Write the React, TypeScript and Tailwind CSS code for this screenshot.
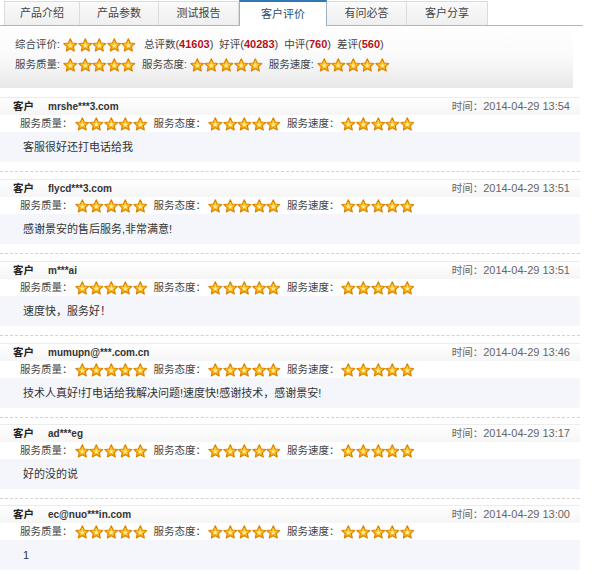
import React from 'react';

const tabs = [
  { label: '产品介绍', w: 'w-[76px]' },
  { label: '产品参数', w: 'w-[79px]' },
  { label: '测试报告', w: 'w-[80px]' },
  { label: '客户评价', w: 'w-[88px]', active: true },
  { label: '有问必答', w: 'w-[80px]' },
  { label: '客户分享', w: 'w-[81px]' },
];

const reviews = [
  { user: 'mrshe***3.com', time: '2014-04-29 13:54', text: '客服很好还打电话给我' },
  { user: 'flycd***3.com', time: '2014-04-29 13:51', text: '感谢景安的售后服务,非常满意!' },
  { user: 'm***ai', time: '2014-04-29 13:51', text: '速度快，服务好！' },
  { user: 'mumupn@***.com.cn', time: '2014-04-29 13:46', text: '技术人真好!打电话给我解决问题!速度快!感谢技术，感谢景安!' },
  { user: 'ad***eg', time: '2014-04-29 13:17', text: '好的没的说' },
  { user: 'ec@nuo***in.com', time: '2014-04-29 13:00', text: '1' },
];

const Star = () => (
  <svg width="14.6" height="14" viewBox="0 0 24 23" className="block">
    <defs>
      <linearGradient id="starFill" x1="0" y1="0" x2="0" y2="1">
        <stop offset="0" stopColor="#ffdc40" />
        <stop offset="1" stopColor="#f4a200" />
      </linearGradient>
    </defs>
    <path
      d="M12 1.2l3.2 6.9 7.4.9-5.5 5.1 1.5 7.4L12 17.8l-6.6 3.7 1.5-7.4L1.4 9l7.4-.9z"
      fill="url(#starFill)"
      stroke="#dc8000"
      strokeWidth="1.8"
      strokeLinejoin="round"
    />
    <path d="M12 8.5l1.2 2.6 2.8.3-2.1 1.9.6 2.8L12 14.7l-2.5 1.4.6-2.8-2.1-1.9 2.8-.3z" fill="#fff3b0" opacity="0.85" />
  </svg>
);

const Stars = ({ className = '' }: { className?: string }) => (
  <span className={`inline-flex ${className}`}>
    {[0, 1, 2, 3, 4].map((i) => (
      <Star key={i} />
    ))}
  </span>
);

const Num = ({ n }: { n: string }) => (
  <span className="text-[11px]">
    (<b className="text-[#b5121b]">{n}</b>)
  </span>
);

export default function App() {
  return (
    <div className="h-[574px] w-[600px] overflow-hidden bg-white text-[10.5px] text-[#444] font-['Liberation_Sans','Noto_Sans_CJK_SC',sans-serif]">
      {/* tabs */}
      <div className="flex h-[26px] w-[583px] items-end border-b border-[#a7b9c8] pl-[4px] text-[11px]">
        {tabs.map((t) =>
          t.active ? (
            <div
              key={t.label}
              className={`${t.w} -mb-px flex h-[26px] items-center justify-center border-x border-t-2 border-x-[#9fb3c4] border-t-[#2f78b4] bg-white text-[#2a4f72]`}
            >
              {t.label}
            </div>
          ) : (
            <div
              key={t.label}
              className={`${t.w} flex h-[24px] items-center justify-center border-r border-t border-[#dcdcdc] bg-gradient-to-b from-[#fafafa] to-[#efefef] text-[#444] first:border-l`}
            >
              {t.label}
            </div>
          ),
        )}
      </div>

      {/* summary */}
      <div className="flex h-[62px] w-[573px] flex-col gap-[3px] bg-gradient-to-b from-white via-[#fafafa] to-[#e8e8e8] pl-[15px] pt-[10px]">
        <div className="flex h-[17px] items-center">
          <span>综合评价:</span>
          <Stars className="ml-[3px]" />
          <span className="ml-[8px]">总评数</span>
          <Num n="41603" />
          <span className="ml-[6px]">好评</span>
          <Num n="40283" />
          <span className="ml-[6px]">中评</span>
          <Num n="760" />
          <span className="ml-[6px]">差评</span>
          <Num n="560" />
        </div>
        <div className="flex h-[17px] items-center">
          <span>服务质量:</span>
          <Stars className="ml-[3px]" />
          <span className="ml-[6px]">服务态度:</span>
          <Stars className="ml-[3px]" />
          <span className="ml-[6px]">服务速度:</span>
          <Stars className="ml-[3px]" />
        </div>
      </div>

      {/* reviews */}
      <div className="mt-[9px] w-[580px]">
        {reviews.map((r, i) => (
          <div key={r.user} className={i < 3 ? 'pb-[7px]' : 'pb-[6px]'}>
            <div className="border-t border-[#ececec]">
              <div className="flex h-[17px] items-center justify-between bg-gradient-to-b from-white to-[#f5f5f5] pl-[13px] pr-[10px]">
                <div className="flex items-center">
                  <b className="w-[35px] text-[#222]">客户</b>
                  <b className="text-[10px] text-[#333]">{r.user}</b>
                </div>
                <span className="text-[#666]">
                  时间：<span className="text-[11px]">{r.time}</span>
                </span>
              </div>
              <div className="flex h-[17px] items-center pl-[20px]">
                <span>服务质量：</span>
                <Stars className="ml-[2px]" />
                <span className="ml-[6px]">服务态度：</span>
                <Stars className="ml-[2px]" />
                <span className="ml-[6px]">服务速度：</span>
                <Stars className="ml-[2px]" />
              </div>
              <div className="flex h-[30px] items-center bg-[#f4f6fb] pl-[23px] text-[11px] text-[#333]">{r.text}</div>
              <div className="mt-[9px] border-b border-dashed border-[#d2d2d2]" />
            </div>
          </div>
        ))}
      </div>
    </div>
  );
}
